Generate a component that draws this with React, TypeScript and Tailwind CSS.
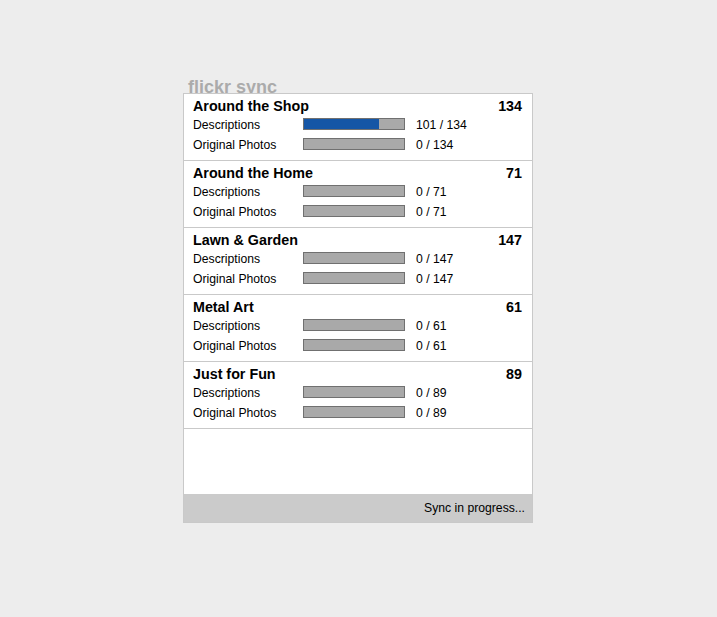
import React from "react";

type Album = { name: string; total: number; desc: number; orig: number };

const albums: Album[] = [
  { name: "Around the Shop", total: 134, desc: 101, orig: 0 },
  { name: "Around the Home", total: 71, desc: 0, orig: 0 },
  { name: "Lawn & Garden", total: 147, desc: 0, orig: 0 },
  { name: "Metal Art", total: 61, desc: 0, orig: 0 },
  { name: "Just for Fun", total: 89, desc: 0, orig: 0 },
];

function Row({ label, value, total }: { label: string; value: number; total: number }) {
  const pct = total > 0 ? (value / total) * 100 : 0;
  return (
    <div className="flex items-center h-[20px] text-[12.2px] leading-[20px] text-black">
      <div className="w-[110px] pt-[1px]">{label}</div>
      <div className="w-[102px] h-[12px] border border-[#707070] bg-[#a9a9a9]">
        <div className="h-full bg-[#1556a6]" style={{ width: `${pct}%` }} />
      </div>
      <div className="ml-[11px] pt-[1px]">
        {value} / {total}
      </div>
    </div>
  );
}

export default function App() {
  return (
    <div
      className="min-h-[617px] w-full bg-[#ededed] pt-[78px] pl-[183px]"
      style={{ fontFamily: '"Liberation Sans", Arial, Helvetica, sans-serif' }}
    >
      <div className="w-[350px]">
        <div className="h-[15px] pl-[5px] text-[18px] leading-[18px] font-bold text-[#ababab]">
          flickr sync
        </div>
        <div className="relative bg-white border border-[#c9c9c9]">
          {albums.map((a) => (
            <div key={a.name} className="border-b border-[#c9c9c9] pl-[9px] pr-[10px] pt-[4px] pb-[6px]">
              <div className="flex justify-between text-[14.3px] leading-[16px] font-bold text-black">
                <span>{a.name}</span>
                <span>{a.total}</span>
              </div>
              <Row label="Descriptions" value={a.desc} total={a.total} />
              <Row label="Original Photos" value={a.orig} total={a.total} />
            </div>
          ))}
          <div className="h-[65px]" />
          <div className="h-[28px] bg-[#cbcbcb] flex items-center justify-end pr-[7px] text-[12.2px] text-black">
            Sync in progress...
          </div>
        </div>
      </div>
    </div>
  );
}
